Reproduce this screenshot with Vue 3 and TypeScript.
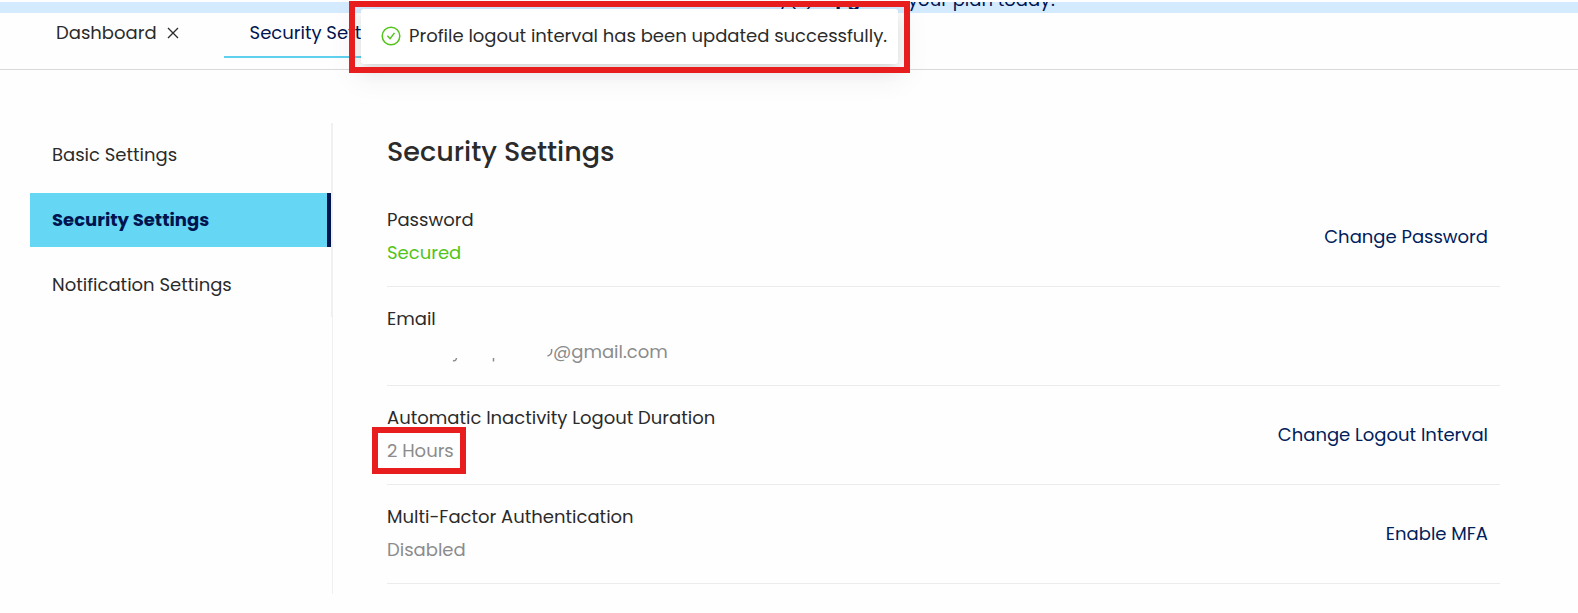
<script setup lang="ts">
interface MenuItem {
  label: string
  active: boolean
}

interface Setting {
  label: string
  value: string
  tone: 'good' | 'muted'
  masked?: boolean
  highlighted?: boolean
  action?: string
}

const menu: MenuItem[] = [
  { label: 'Basic Settings', active: false },
  { label: 'Security Settings', active: true },
  { label: 'Notification Settings', active: false },
]

const settings: Setting[] = [
  { label: 'Password', value: 'Secured', tone: 'good', action: 'Change Password' },
  { label: 'Email', value: '@gmail.com', tone: 'muted', masked: true },
  {
    label: 'Automatic Inactivity Logout Duration',
    value: '2 Hours',
    tone: 'muted',
    highlighted: true,
    action: 'Change Logout Interval',
  },
  { label: 'Multi-Factor Authentication', value: 'Disabled', tone: 'muted', action: 'Enable MFA' },
]
</script>

<template>
  <div class="page">
    <div class="banner">
      <p class="banner-text">y(s). <strong>Upgrade</strong> your plan today!</p>
    </div>

    <nav class="tabs" aria-label="Open pages">
      <div class="tab">
        <a href="#dashboard" class="tab-link">Dashboard</a>
        <button type="button" class="close" aria-label="Close Dashboard">
          <svg width="12" height="12" viewBox="0 0 12 12" aria-hidden="true">
            <path d="M1 1 11 11M11 1 1 11" fill="none" stroke="currentColor" stroke-width="1.3" />
          </svg>
        </button>
      </div>
      <div class="tab tab-active">
        <a href="#security" class="tab-link" aria-current="page">Security Settings</a>
      </div>
    </nav>

    <div class="toast-frame">
      <div class="toast" role="status">
        <svg width="20" height="20" viewBox="0 0 20 20" aria-hidden="true">
          <circle cx="10" cy="10" r="8.8" fill="none" stroke="#52c41a" stroke-width="1.5" />
          <path d="M6.4 9.8 9.1 12.7 13.5 6.9" fill="none" stroke="#52c41a" stroke-width="1.5" />
        </svg>
        <span>Profile logout interval has been updated successfully.</span>
      </div>
    </div>

    <div class="body">
      <nav class="menu" aria-label="Settings">
        <a
          v-for="item in menu"
          :key="item.label"
          href="#"
          class="menu-item"
          :class="{ 'menu-item-active': item.active }"
          >{{ item.label }}</a
        >
      </nav>

      <main class="content">
        <h1 class="title">Security Settings</h1>
        <section v-for="s in settings" :key="s.label" class="row">
          <div class="info">
            <div class="label">{{ s.label }}</div>
            <div class="value" :class="s.tone">
              <svg
                v-if="s.masked"
                class="mask"
                width="166"
                height="24"
                viewBox="0 0 166 24"
                aria-hidden="true"
              >
                <path
                  d="M66 20.500Q69 21.500 69.500 18M106.500 18V21.500M164.500 9Q165.500 14.500 160.500 16"
                  fill="none"
                  stroke="currentColor"
                  stroke-width="1.5"
                />
              </svg>
              <span :class="{ highlight: s.highlighted }">{{ s.value }}</span>
            </div>
          </div>
          <button v-if="s.action" type="button" class="action">{{ s.action }}</button>
        </section>
      </main>
    </div>
  </div>
</template>

<style>
body {
  margin: 0;
  background: #fefefe;
}
</style>

<style scoped>
.page {
  position: relative;
  padding-top: 2px;
  font-family: Poppins, Inter, 'Open Sans', sans-serif;
  font-size: 18px;
  line-height: 33px;
  color: #2b2b2b;
}

.banner {
  display: flex;
  align-items: flex-end;
  justify-content: center;
  box-sizing: border-box;
  height: 11px;
  padding-bottom: 4px;
  overflow: hidden;
  background: #d4ebff;
  color: #00144f;
}

.banner-text {
  margin: 0;
  padding-left: 256px;
  line-height: 18px;
  white-space: nowrap;
}

.tabs {
  display: flex;
  gap: 19px;
  height: 56px;
  padding-left: 30px;
  border-bottom: 1px solid #d9d9d9;
}

.tab {
  display: flex;
  align-items: center;
  gap: 10px;
  box-sizing: border-box;
  height: 45px;
  padding: 0 26px 4px;
  border-bottom: 2px solid transparent;
}

.tab-active {
  border-color: #5fd0ee;
}

.tab-link {
  color: inherit;
  text-decoration: none;
  white-space: nowrap;
}

.tab-active .tab-link {
  color: #00144f;
}

.close {
  display: flex;
  padding: 0;
  border: 0;
  background: none;
  color: inherit;
}

.toast-frame {
  position: absolute;
  top: 1px;
  left: 349px;
  padding: 8px 12px 9px;
}

.toast-frame::after {
  content: '';
  position: absolute;
  inset: 0;
  border: 6px solid #e81e1e;
  pointer-events: none;
}

.toast {
  display: flex;
  align-items: center;
  gap: 8px;
  box-sizing: border-box;
  height: 55px;
  padding: 0 11px 2px 20px;
  border-radius: 3px;
  background: #fff;
  box-shadow:
    0 3px 6px -4px rgba(0, 0, 0, 0.12),
    0 6px 16px rgba(0, 0, 0, 0.08),
    0 9px 28px 8px rgba(0, 0, 0, 0.05);
  white-space: nowrap;
}

.body {
  display: flex;
  align-items: stretch;
  padding: 53px 78px 19px 30px;
}

.menu {
  display: flex;
  flex: 0 0 301px;
  flex-direction: column;
  gap: 11px;
  align-self: flex-start;
  padding: 5px 0;
  border-right: 1px solid #f0f0f0;
}

.menu-item {
  box-sizing: border-box;
  height: 54px;
  padding-left: 22px;
  border-right: 4px solid transparent;
  line-height: 54px;
  color: inherit;
  text-decoration: none;
}

.menu-item-active {
  border-color: #00144f;
  background: #66d6f5;
  color: #00144f;
  font-weight: 700;
}

.content {
  flex: 1;
  min-width: 0;
  padding: 9px 0 10px 54px;
  border-left: 1px solid #f0f0f0;
}

.title {
  margin: 0 0 16px;
  font-size: 27px;
  font-weight: 500;
  line-height: 40px;
}

.row {
  display: flex;
  align-items: center;
  justify-content: space-between;
  padding: 15px 12px 17px 0;
  border-bottom: 1px solid #ebebeb;
}

.good {
  color: #52c41a;
}

.muted {
  color: #8c8c8c;
}

.value {
  display: flex;
  align-items: center;
}

.highlight {
  position: relative;
}

.highlight::after {
  content: '';
  position: absolute;
  inset: -7px -12px -7px -15px;
  border: 6px solid #e81e1e;
}

.action {
  padding: 0;
  border: 0;
  background: none;
  color: #00205b;
  font: inherit;
}
</style>
